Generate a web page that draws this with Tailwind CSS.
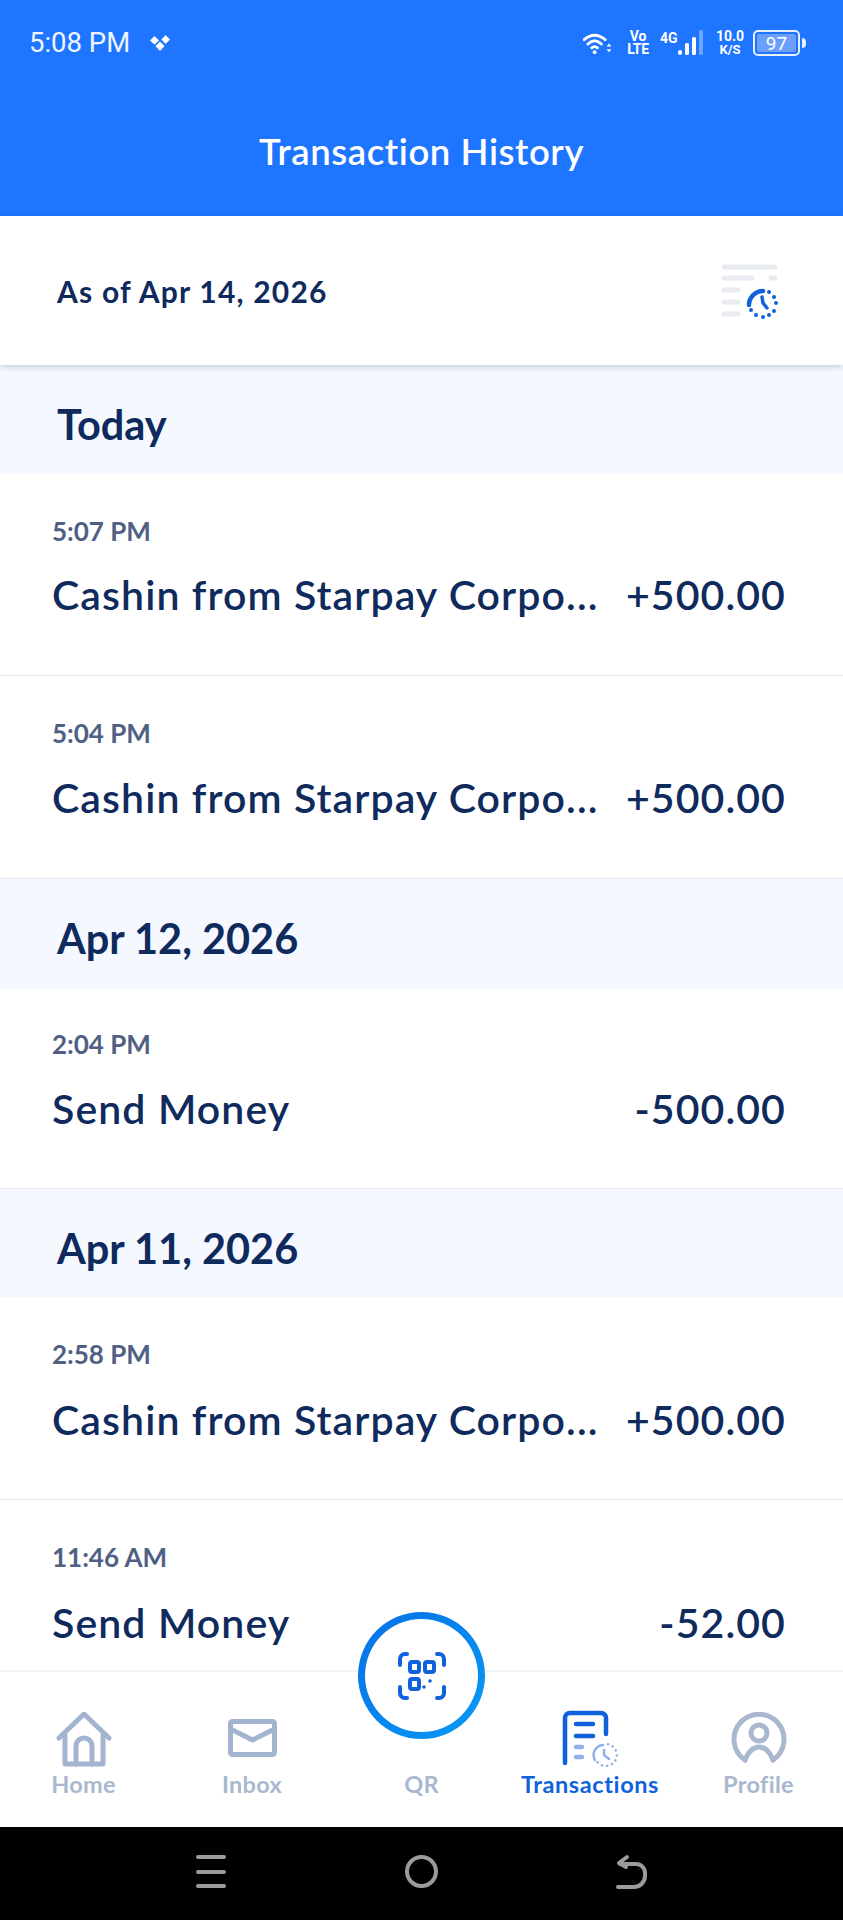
<!DOCTYPE html>
<html><head><meta charset="utf-8"><script src="https://cdn.jsdelivr.net/npm/@tailwindcss/browser@4"></script></head>
<body class="m-0 bg-white">
<div class="relative w-[843px] h-[1920px] overflow-hidden flex flex-col bg-white font-['Lato','Noto_Sans',sans-serif] text-[#0f2a5c]">
  <header class="h-[216px] shrink-0 bg-[#1e75ff] text-white flex flex-col">
    <div class="h-[86px] flex items-center justify-between pl-[29px] pr-[37px]">
      <div class="flex items-center gap-[19px]">
        <span class="font-['Roboto',sans-serif] text-[27.5px] leading-none text-[#eef5ff]">5:08 PM</span>
        <svg width="22" height="18" viewBox="0 0 22 18" fill="#fff"><path d="M5.500 2 L10 6.500 L5.500 10.500 L1 6.500Z"/><path d="M16.500 1 L21 5.500 L16.500 10 L12.500 5.500Z"/><path d="M11 7.500 L15.500 12 L11 17 L6.500 12Z"/></svg>
      </div>
      <div class="flex items-center">
        <svg width="29" height="23" viewBox="0 0 30 24" fill="none" stroke="#fff" stroke-width="3" stroke-linecap="round"><path d="M1 8 Q12 -1 23 8"/><path d="M5 12.500 Q12 6 19 12.500"/><path d="M9 16.500 Q12 14 15 16.500"/><circle cx="12" cy="21" r="2" fill="#fff" stroke="none"/><path d="M27 12 l-2.500 3h5z M27 21 l-2.500 -3h5z" fill="#fff" stroke="none"/></svg>
        <div class="ml-[15px] w-[22px] flex flex-col items-center font-['Roboto',sans-serif] font-bold text-[14px] leading-[13px]"><span>Vo</span><span class="tracking-[-0.3px]">LTE</span></div>
        <div class="ml-[11px] relative w-[43px] h-[26px]">
          <span class="absolute left-0 top-[1px] font-['Roboto',sans-serif] font-bold text-[14px] leading-[14px]">4G</span>
          <svg class="absolute left-[18px] top-0" width="25" height="26" viewBox="0 0 25 26"><rect x="0" y="20" width="4" height="5" rx="2" fill="#fff"/><rect x="7" y="13" width="4" height="12" rx="1.500" fill="#fff"/><rect x="14" y="7" width="4" height="18" rx="1.500" fill="#fff"/><rect x="21" y="0" width="4" height="25" rx="1.500" fill="#6ea5ff"/></svg>
        </div>
        <div class="ml-[13px] w-[28px] flex flex-col items-center font-['Roboto',sans-serif] font-bold text-[14px] leading-[13px]"><span>10.0</span><span class="text-[13px]">K/S</span></div>
        <div class="ml-[9px] flex items-center gap-[2px]">
          <div class="w-[47px] h-[26px] border-2 border-[#e8f0ff] rounded-[5px] p-[2px]"><div class="h-full w-full rounded-[2px] bg-[#6b9ffb] flex items-center justify-center font-['Roboto',sans-serif] text-[19px] leading-none text-white">97</div></div>
          <div class="w-[4px] h-[10px] rounded-r-sm bg-[#e8f0ff]"></div>
        </div>
      </div>
    </div>
    <h1 class="h-[130px] m-0 flex items-center justify-center text-[36.500px] font-semibold tracking-[0.6px] leading-none">Transaction History</h1>
  </header>

  <section class="relative z-10 h-[149px] shrink-0 bg-white flex items-center justify-between pl-[57px] pr-[63px] shadow-[0_2px_6px_rgba(30,50,90,0.22)]">
    <span class="text-[30px] font-bold tracking-[1.2px] leading-none">As of Apr 14, 2026</span>
    <svg width="60" height="56" viewBox="0 0 60 56" fill="none" stroke-linecap="round">
      <g stroke="#e8ebef" stroke-width="5"><path d="M4 4H55"/><path d="M4 15H32"/><path d="M51 15H55"/><path d="M4 27H18"/><path d="M4 39H18"/><path d="M4 51H18"/></g>
      <path d="M29 42A14 14 0 0 1 43 28" stroke="#0f62dc" stroke-width="4.500"/>
      <path d="M42 34L43 40L47 45" stroke="#0f62dc" stroke-width="3.500"/>
      <g fill="#0f62dc"><circle cx="49" cy="29" r="2"/><circle cx="54" cy="34" r="2"/><circle cx="56" cy="40" r="2"/><circle cx="54" cy="48" r="2"/><circle cx="49" cy="52" r="2"/><circle cx="43" cy="54" r="2"/><circle cx="36" cy="52" r="2"/><circle cx="31" cy="47" r="2"/></g>
    </svg>
  </section>

  <main class="flex-1 min-h-0 overflow-hidden flex flex-col">
    <div class="h-[109px] shrink-0 bg-[#f5f9ff] flex items-center pl-[57px] pt-[11px] text-[41.500px] font-bold leading-none">Today</div>
    <div class="h-[202px] shrink-0 bg-white border-b border-[#e4e8ef] pl-[52px] pr-[57px] flex flex-col">
      <div class="mt-[44px] text-[26px] font-bold leading-none text-[#4f6084]">5:07 PM</div>
      <div class="mt-[26px] flex justify-between items-center text-[41px] font-semibold tracking-[1.1px] leading-[50px]"><span>Cashin from Starpay Corpo...</span><span>+500.00</span></div>
    </div>
    <div class="h-[203px] shrink-0 bg-white border-b border-[#e4e8ef] pl-[52px] pr-[57px] flex flex-col">
      <div class="mt-[44px] text-[26px] font-bold leading-none text-[#4f6084]">5:04 PM</div>
      <div class="mt-[27px] flex justify-between items-center text-[41px] font-semibold tracking-[1.1px] leading-[50px]"><span>Cashin from Starpay Corpo...</span><span>+500.00</span></div>
    </div>
    <div class="h-[110px] shrink-0 bg-[#f5f9ff] flex items-center pl-[57px] pt-[10px] text-[41.500px] font-bold leading-none">Apr 12, 2026</div>
    <div class="h-[200px] shrink-0 bg-white border-b border-[#e4e8ef] pl-[52px] pr-[57px] flex flex-col">
      <div class="mt-[42px] text-[26px] font-bold leading-none text-[#4f6084]">2:04 PM</div>
      <div class="mt-[27px] flex justify-between items-center text-[41px] font-semibold tracking-[1.1px] leading-[50px]"><span>Send Money</span><span>-500.00</span></div>
    </div>
    <div class="h-[108px] shrink-0 bg-[#f5f9ff] flex items-center pl-[57px] pt-[11px] text-[41.500px] font-bold leading-none">Apr 11, 2026</div>
    <div class="h-[203px] shrink-0 bg-white border-b border-[#e4e8ef] pl-[52px] pr-[57px] flex flex-col">
      <div class="mt-[44px] text-[26px] font-bold leading-none text-[#4f6084]">2:58 PM</div>
      <div class="mt-[28px] flex justify-between items-center text-[41px] font-semibold tracking-[1.1px] leading-[50px]"><span>Cashin from Starpay Corpo...</span><span>+500.00</span></div>
    </div>
    <div class="h-[170px] shrink-0 bg-white pl-[52px] pr-[57px] flex flex-col">
      <div class="mt-[44px] text-[26px] font-bold leading-none text-[#4f6084]">11:46 AM</div>
      <div class="mt-[28px] flex justify-between items-center text-[41px] font-semibold tracking-[1.1px] leading-[50px]"><span>Send Money</span><span>-52.00</span></div>
    </div>
  </main>

  <nav class="relative h-[157px] shrink-0 bg-white border-t-2 border-[#f3f4f6] grid grid-cols-[167px_170px_169px_168px_169px] text-[23.500px] tracking-[0.3px] font-bold leading-none text-[#a9b7cf]">
    <div class="flex flex-col items-center pt-[40px]">
      <svg width="56" height="56" viewBox="0 0 56 56" fill="none" stroke="#a3b4d0" stroke-width="5" stroke-linejoin="round" stroke-linecap="round"><path d="M3 26 L28 2 L53 26"/><path d="M9 23V52H47V23"/><path d="M20 52V34a8 8 0 0 1 16 0V52"/></svg>
      <span class="mt-[5px]">Home</span>
    </div>
    <div class="flex flex-col items-center pt-[40px]">
      <svg width="56" height="56" viewBox="0 0 56 56" fill="none" stroke="#a3b4d0" stroke-width="5" stroke-linejoin="round"><rect x="6.500" y="9.500" width="44" height="33" rx="2"/><path d="M6.500 17 L28.500 28 L50.500 17"/></svg>
      <span class="mt-[5px]">Inbox</span>
    </div>
    <div class="flex flex-col items-center pt-[101px]"><span>QR</span></div>
    <div class="flex flex-col items-center pt-[38px] text-[#0f62dc] tracking-[0.6px]">
      <svg width="56" height="58" viewBox="0 0 56 58" fill="none" stroke-linecap="round">
        <path d="M3 53V8a5 5 0 0 1 5-5H39a5 5 0 0 1 5 5V24" stroke="#0f62dc" stroke-width="4.500"/>
        <path d="M14 14H31M14 26H31" stroke="#0f62dc" stroke-width="4.500"/>
        <path d="M14 37H20M14 47H20" stroke="#8fb0ea" stroke-width="4.500"/>
        <path d="M33 50A10 10 0 0 1 41 35" stroke="#8fb0ea" stroke-width="2.500"/>
        <path d="M42 40V45L47 49" stroke="#8fb0ea" stroke-width="2.500"/>
        <path d="M46 34.200A11 11 0 1 1 34 50" stroke="#8fb0ea" stroke-width="2.500" stroke-dasharray="0.100 5"/>
      </svg>
      <span class="mt-[5px]">Transactions</span>
    </div>
    <div class="flex flex-col items-center pt-[40px]">
      <svg width="56" height="56" viewBox="0 0 56 56" fill="none" stroke="#a9b7cf" stroke-width="5" stroke-linecap="round"><path d="M14 48A25 25 0 1 1 42 48"/><path d="M14 48C18 38 23 35 28 35S38 38 42 48"/><circle cx="28" cy="21" r="8"/></svg>
      <span class="mt-[5px]">Profile</span>
    </div>
    <div class="absolute left-[358px] top-[-60px] w-[127px] h-[127px] rounded-full bg-linear-to-br from-[#0a6fe6] to-[#0c9bf5] p-[7px]">
      <div class="w-full h-full rounded-full bg-white flex items-center justify-center">
      <svg width="48" height="48" viewBox="0 0 48 48" fill="none" stroke="#0f62dc" stroke-width="4" stroke-linecap="round">
        <path d="M9 2H7a5 5 0 0 0-5 5V13"/><path d="M39 2H41a5 5 0 0 1 5 5V13"/><path d="M9 46H7a5 5 0 0 1-5-5V35"/><path d="M39 46H41a5 5 0 0 0 5-5V35"/>
        <rect x="12" y="10" width="9" height="10" rx="2"/><rect x="27" y="10" width="9" height="10" rx="2"/><rect x="12" y="27" width="9" height="10" rx="2"/>
        <circle cx="32" cy="29" r="1.800" fill="#0f62dc" stroke="none"/><circle cx="26" cy="35" r="1.800" fill="#0f62dc" stroke="none"/>
      </svg>
      </div>
    </div>
  </nav>

  <footer class="h-[93px] shrink-0 bg-black flex items-start">
    <div class="ml-[196px] mt-[28px] w-[30px] h-[33px] flex flex-col justify-between">
      <div class="h-[4px] rounded-full bg-[#9b9b9b]"></div><div class="h-[4px] rounded-full bg-[#9b9b9b]"></div><div class="h-[4px] rounded-full bg-[#9b9b9b]"></div>
    </div>
    <div class="ml-[179px] mt-[28px] w-[33px] h-[33px] rounded-full border-[4px] border-[#9b9b9b]"></div>
    <svg class="ml-[178px] mt-[27px]" width="32" height="36" viewBox="0 0 32 36" fill="none" stroke="#9b9b9b" stroke-width="4" stroke-linecap="round" stroke-linejoin="round"><path d="M2 33H18a11 11 0 0 0 11-11V19a9 9 0 0 0-9-9H4"/><path d="M11 3L3 9L10 13"/></svg>
  </footer>
</div>
</body></html>
